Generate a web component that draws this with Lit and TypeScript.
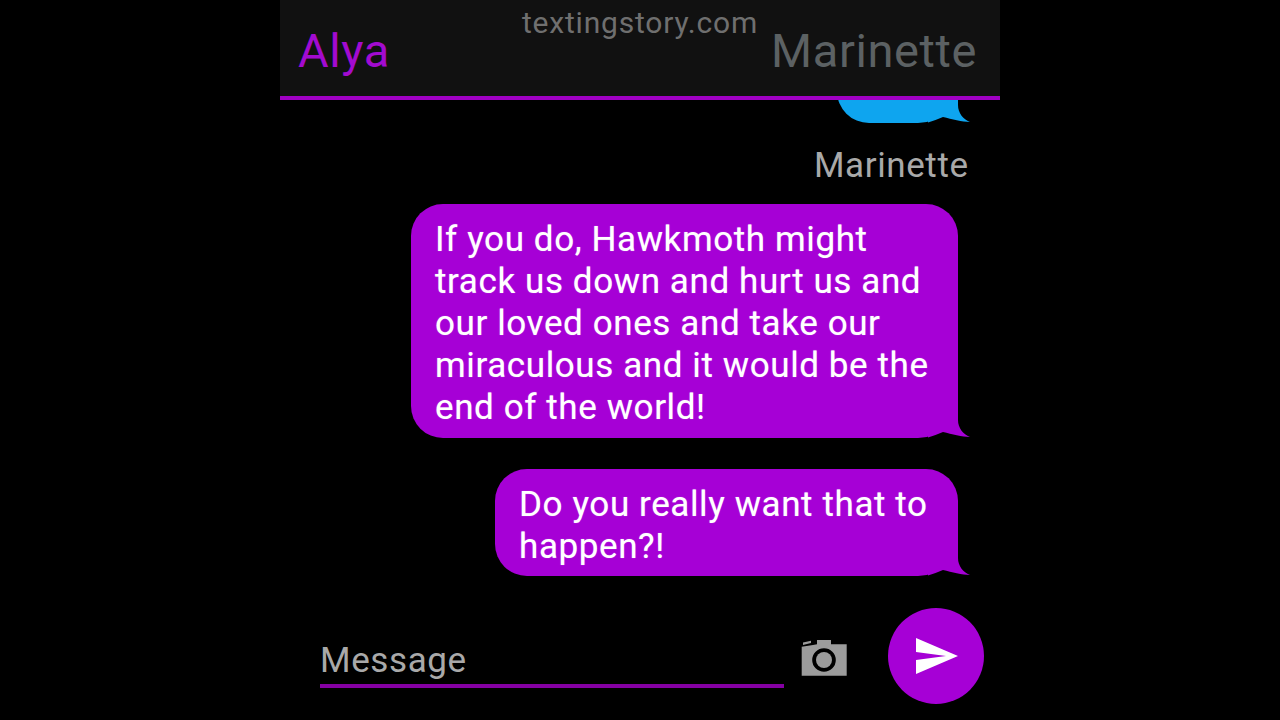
import { LitElement, css, html, svg } from "lit";
import { customElement, state } from "lit/decorators.js";

type Message = { text: string; width: number; color: string };

const tail = svg`<svg class="tail" width="42" height="40" viewBox="0 0 42 40">
  <path d="M0 0 H30 V22 C30 30 35 36 42 39 C34 39 24 36 15 34 C10 36 5 38 0 39.5 Z" fill="currentColor"/>
</svg>`;

@customElement("app-root")
export class AppRoot extends LitElement {
  static styles = css`
    :host {
      display: block;
      height: 720px;
      background: #000;
      font-family: Roboto, "Liberation Sans", sans-serif;
      letter-spacing: 0.6px;
    }

    .screen {
      width: 720px;
      height: 720px;
      margin: 0 auto;
      display: flex;
      flex-direction: column;
      background: #000;
    }

    .header {
      position: relative;
      flex: none;
      display: flex;
      justify-content: space-between;
      align-items: center;
      padding: 4px 23px 0 18px;
      box-sizing: border-box;
      background: #111;
      border-bottom: 4px solid #a000c4;
      height: 100px;
      font-size: 47px;
    }

    .alya {
      color: #a30bd0;
    }

    .peer {
      color: #5c6163;
    }

    .watermark {
      position: absolute;
      top: 6px;
      left: 0;
      right: 0;
      text-align: center;
      font-size: 30px;
      letter-spacing: 0.8px;
      line-height: 34px;
      color: #6f6f6f;
    }

    .messages {
      flex: 1;
      min-height: 0;
      overflow: hidden;
      display: flex;
      flex-direction: column;
      justify-content: flex-end;
      align-items: flex-end;
      padding: 0 42px 24px 0;
    }

    .bubble {
      position: relative;
      flex: none;
      box-sizing: border-box;
      padding: 15px 24px 8px;
      border-radius: 32px 32px 40px 32px;
      font-size: 35px;
      line-height: 42.2px;
      background: currentColor;
    }

    .bubble span {
      color: #fff;
      text-shadow: 0 0 1px rgba(255, 255, 255, 0.5);
    }

    .bubble + .bubble {
      margin-top: 31px;
    }

    .tail {
      position: absolute;
      right: -12px;
      bottom: 0;
    }

    .blue {
      width: 121px;
      height: 108px;
      color: #0ea5ef;
    }

    .name {
      flex: none;
      margin: 21px -10.6px 16px 0;
      font-size: 35px;
      line-height: 44px;
      color: #a9a9a9;
    }

    .footer {
      flex: none;
      height: 120px;
      display: flex;
      align-items: flex-start;
      box-sizing: border-box;
      padding: 8px 16px 0 40px;
    }

    .input {
      width: 464px;
      height: 80px;
      box-sizing: border-box;
      padding-top: 32px;
      border-bottom: 4px solid #8500a3;
      font-size: 35px;
      line-height: 42px;
      color: #a9a9a9;
    }

    .camera {
      margin: 30px 0 0 16px;
      flex: none;
    }

    .send {
      margin-left: 40px;
      width: 96px;
      height: 96px;
      flex: none;
      border-radius: 50%;
      background: #a600d6;
      display: flex;
      align-items: center;
      justify-content: center;
    }
  `;

  @state()
  messages: Message[] = [
    {
      text: "If you do, Hawkmoth might track us down and hurt us and our loved ones and take our miraculous and it would be the end of the world!",
      width: 547,
      color: "#a600d6",
    },
    {
      text: "Do you really want that to happen?!",
      width: 463,
      color: "#a600d6",
    },
  ];

  render() {
    return html`<div class="screen">
      <div class="header">
        <span class="alya">Alya</span>
        <span class="peer">Marinette</span>
        <div class="watermark">textingstory.com</div>
      </div>
      <div class="messages">
        <div class="bubble blue">${tail}</div>
        <div class="name">Marinette</div>
        ${this.messages.map(
          (m) => html`<div
            class="bubble"
            style="width:${m.width}px;color:${m.color}"
          >
            <span>${m.text}</span>${tail}
          </div>`
        )}
      </div>
      <div class="footer">
        <div class="input">Message</div>
        <svg class="camera" width="48" height="40" viewBox="0 0 48 40">
          <path
            fill="#9c9c9c"
            fill-rule="evenodd"
            d="M1.7 37.7 V8.7 L13 7 L17 6.3 V2 H31 V6.3 H46.7 V37.7 Z M24 10.2 A11.8 11.8 0 1 0 24 33.8 A11.8 11.8 0 1 0 24 10.2 Z"
          />
          <path fill="#9c9c9c" d="M3 4.5 L11 2.8 V5 L3 7 Z" />
          <circle cx="24" cy="22" r="8" fill="#9c9c9c" />
        </svg>
        <div class="send">
          <svg width="48" height="48" viewBox="0 0 24 24">
            <path fill="#fff" d="M2.01 21L23 12 2.01 3 2 10l15 2-15 2z" />
          </svg>
        </div>
      </div>
    </div>`;
  }
}
